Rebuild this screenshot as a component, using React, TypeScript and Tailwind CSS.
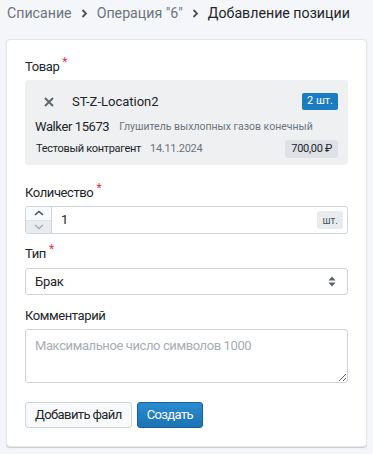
import React from "react";

const font = { fontFamily: 'Roboto, "Noto Sans", sans-serif' };

function Required() {
  return <span className="relative -top-[5px] ml-[3px] text-[12px] text-[#dc3545]">*</span>;
}

function Label({ children, required }: { children: React.ReactNode; required?: boolean }) {
  return (
    <div className="h-[20px] text-[13px] leading-[20px] tracking-[-0.4px] text-[#212529]">
      {children}
      {required && <Required />}
    </div>
  );
}

function Chevron() {
  return (
    <svg width="7" height="9" viewBox="0 0 7 9" className="mx-[9px] shrink-0">
      <path d="M1.5 1 L5 4.5 L1.5 8" fill="none" stroke="#495057" strokeWidth="1.8" />
    </svg>
  );
}

export default function App() {
  return (
    <div className="min-h-screen bg-[#f4f6f9] text-[#212529]" style={font}>
      {/* breadcrumbs */}
      <div className="flex h-[39px] items-center whitespace-nowrap px-[7px] pb-[12px] text-[14.2px]">
        <span className="text-[#6c757d]">Списание</span>
        <Chevron />
        <span className="text-[#6c757d]">Операция "6"</span>
        <Chevron />
        <span>Добавление позиции</span>
      </div>

      <div className="mx-[6px] rounded-[4px] border border-[#e3e6ea] bg-white px-[18px] pt-[17px] pb-[18px] shadow-[0_1px_1px_rgba(0,0,0,0.18)]">
        <Label required>Товар</Label>
        <div className="mt-[3px] h-[85px] whitespace-nowrap rounded-[4px] bg-[#eef0f2] px-[10px] pt-[13px]">
          <div className="flex h-[17px] items-center">
            <svg width="10" height="10" viewBox="0 0 10 10" className="ml-[9px]">
              <path d="M1 1 L9 9 M9 1 L1 9" stroke="#5f676e" strokeWidth="2" />
            </svg>
            <span className="ml-[18px] text-[13px]">ST-Z-Location2</span>
            <span className="ml-auto flex h-[17px] items-center rounded-[2px] bg-[#1b7dc0] px-[5px] text-[11px] text-white">
              2 шт.
            </span>
          </div>
          <div className="mt-[7px] flex h-[20px] items-center">
            <span className="text-[13px] tracking-[-0.4px]">Walker 15673</span>
            <span className="ml-[10px] text-[10.5px] text-[#6c757d]">Глушитель выхлопных газов конечный</span>
          </div>
          <div className="mt-[3px] flex h-[18px] items-center text-[11px] tracking-[-0.3px]">
            <span className="ml-[1px]">Тестовый контрагент</span>
            <span className="ml-[9px] text-[#6c757d]">14.11.2024</span>
            <span className="ml-auto flex h-[18px] items-center rounded-[3px] bg-[#dee1e5] px-[6px]">700,00 ₽</span>
          </div>
        </div>

        <div className="mt-[18px]">
          <Label required>Количество</Label>
        </div>
        <div className="mt-[3px] flex h-[28px] overflow-hidden rounded-[3px] border border-[#ced4da]">
          <div className="flex w-[26px] flex-col border-r border-[#ced4da]">
            <div className="flex flex-1 items-center justify-center border-b border-[#dfe3e7] bg-[#f8f9fa]">
              <svg width="10" height="6" viewBox="0 0 10 6">
                <path d="M1 5 L5 1.5 L9 5" fill="none" stroke="#495057" strokeWidth="1.6" />
              </svg>
            </div>
            <div className="flex flex-1 items-center justify-center bg-[#e9ecef]">
              <svg width="10" height="6" viewBox="0 0 10 6">
                <path d="M1 1 L5 4.5 L9 1" fill="none" stroke="#a3abb3" strokeWidth="1.4" />
              </svg>
            </div>
          </div>
          <div className="flex flex-1 items-center pl-[9px] text-[13px]">1</div>
          <div className="flex items-center pr-[4px]">
            <span className="flex h-[18px] items-center rounded-[3px] bg-[#e9ecef] px-[5px] text-[10px] text-[#495057]">
              шт.
            </span>
          </div>
        </div>

        <div className="mt-[10px]">
          <Label required>Тип</Label>
        </div>
        <div className="mt-[4px] flex h-[27px] items-center rounded-[3px] border border-[#ced4da] bg-white px-[9px] text-[13px] tracking-[-0.3px]">
          <span>Брак</span>
          <svg width="8" height="11" viewBox="0 0 8 11" className="ml-auto mr-[2px]">
            <path d="M4 0.5 L7.5 4.5 L0.5 4.5 Z M4 10.5 L7.5 6.5 L0.5 6.5 Z" fill="#5a6268" />
          </svg>
        </div>

        <div className="mt-[11px]">
          <Label>Комментарий</Label>
        </div>
        <textarea
          className="mt-[3px] block h-[54px] w-full rounded-[3px] border border-[#ced4da] px-[9px] py-[6px] text-[13px] tracking-[-0.4px] outline-none placeholder:text-[#a7adb3]"
          placeholder="Максимальное число символов 1000"
          style={font}
        />

        <div className="mt-[19px] flex gap-[5px]">
          <button
            type="button"
            className="h-[26px] rounded-[3px] border border-[#ced4da] bg-[#f8f9fa] px-[9px] text-[13px] tracking-[-0.6px] text-[#212529]"
          >
            Добавить файл
          </button>
          <button
            type="button"
            className="h-[26px] rounded-[3px] border border-[#17619a] bg-gradient-to-b from-[#2a8ccf] to-[#1a73b5] px-[9px] text-[13px] tracking-[-0.6px] text-white"
          >
            Создать
          </button>
        </div>
      </div>
    </div>
  );
}
